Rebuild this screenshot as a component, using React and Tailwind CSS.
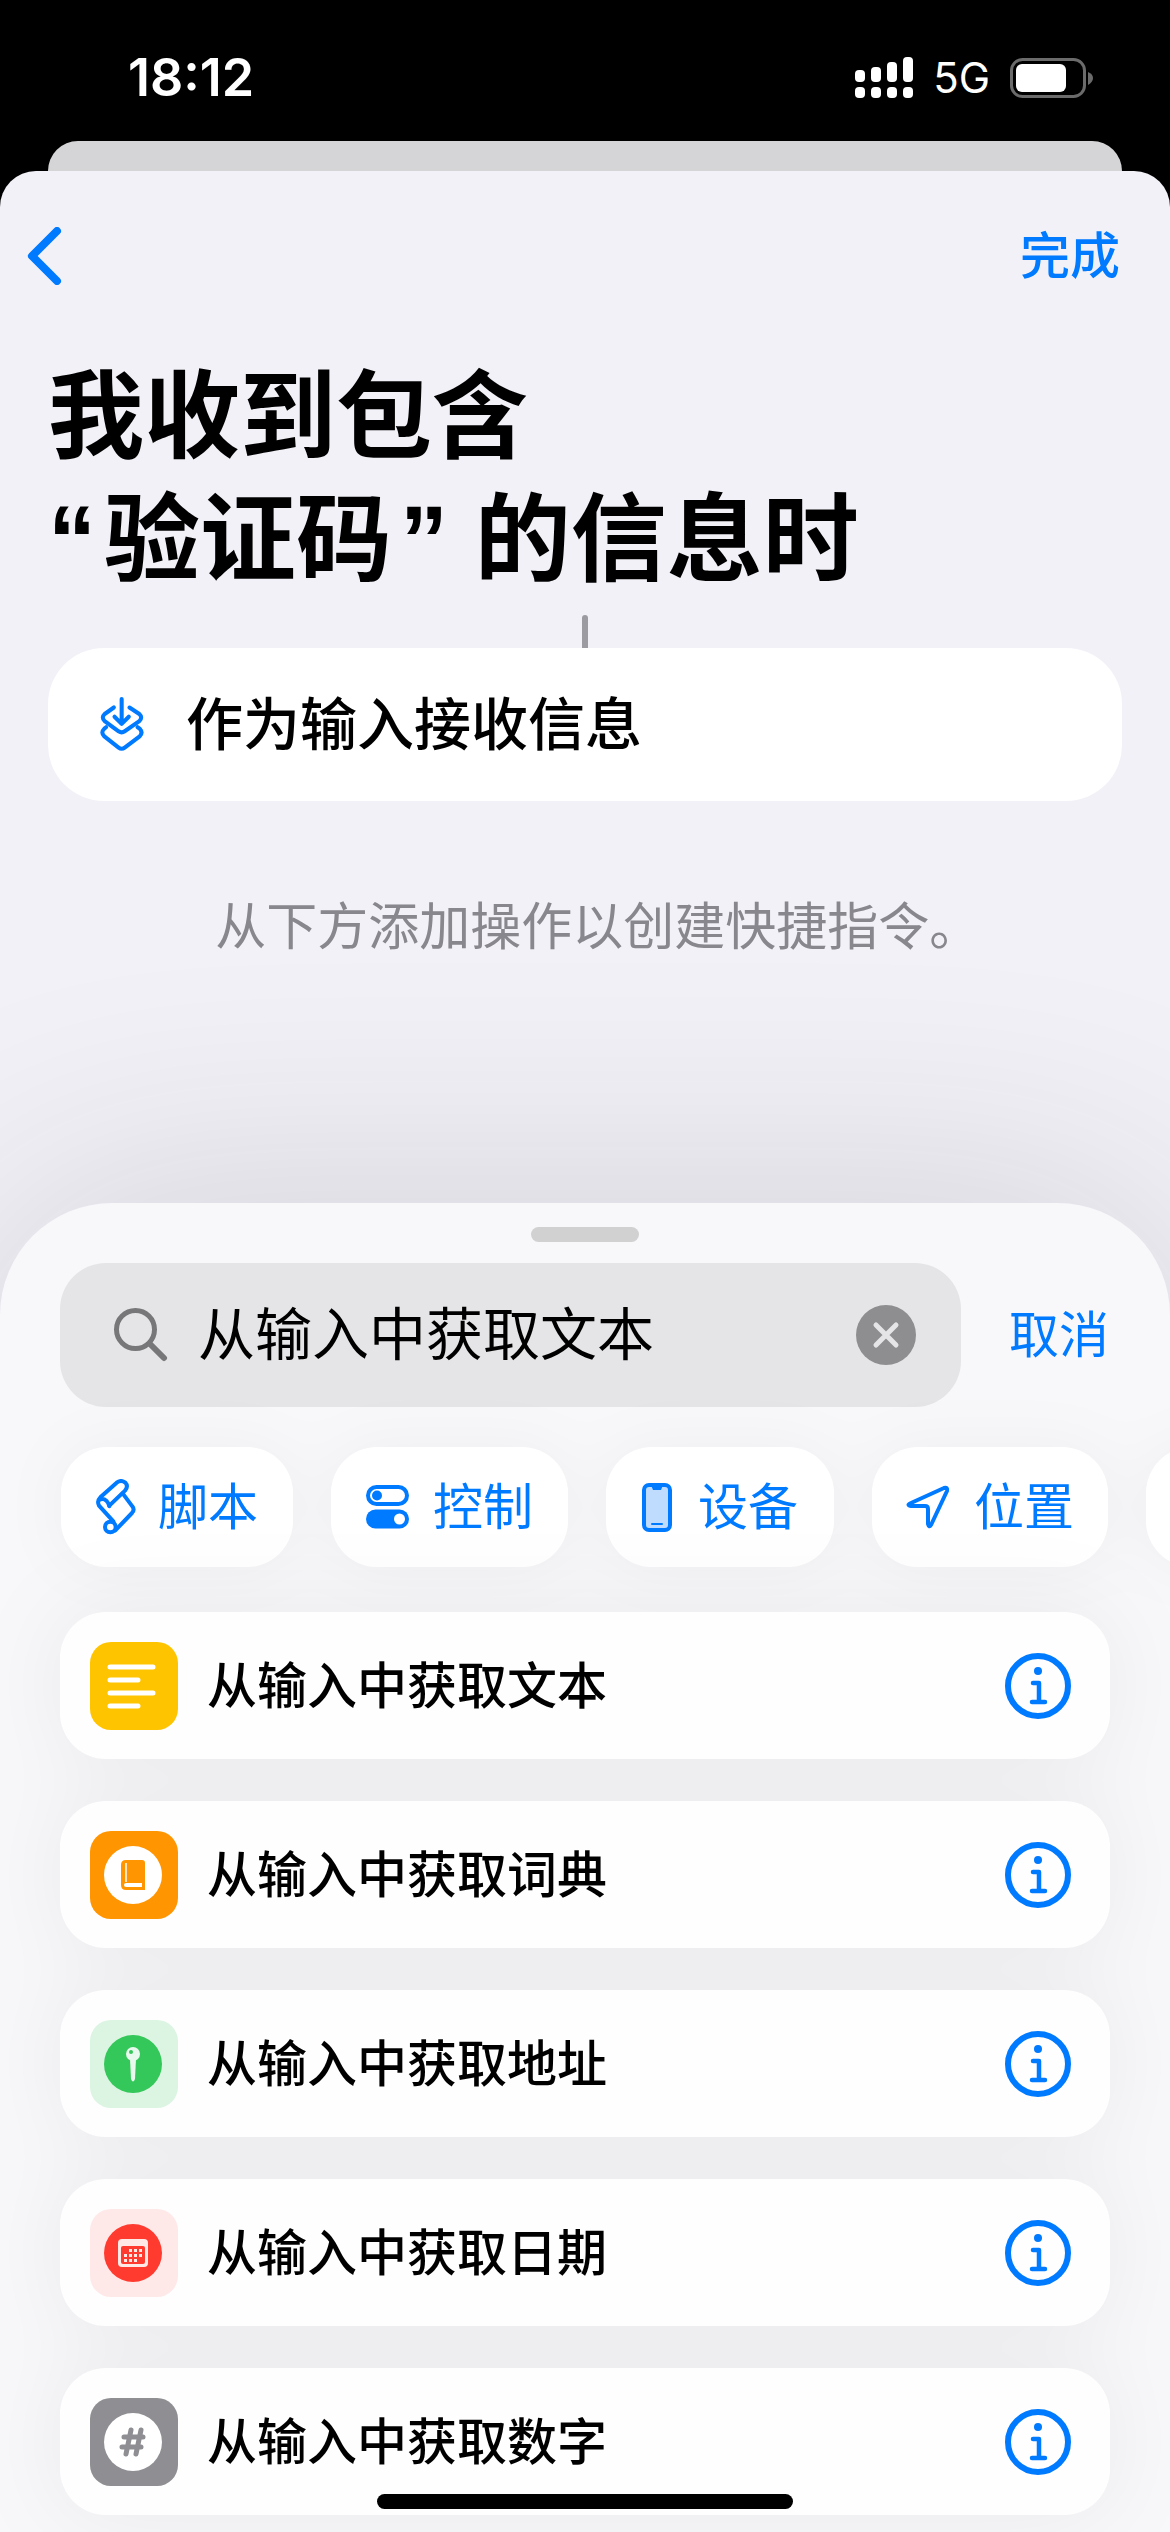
import { useState } from 'react';

const FONT = "font-['Inter','Noto_Sans_CJK_SC',sans-serif]";

function StatusBar() {
    return (
        <div className="flex h-[141px] items-start justify-between pt-[48px] pr-[76px] pl-[128px] text-white">
            <span className="text-[52px] leading-[60px] font-semibold">18:12</span>
            <div className="flex h-[60px] items-center gap-[20px]">
                <svg className="h-[42px] w-[58px]" viewBox="0 0 58 42" fill="currentColor">
                    <rect x="0" y="13" width="10" height="12" rx="4" />
                    <rect x="16" y="10" width="10" height="15" rx="4" />
                    <rect x="32" y="5" width="10" height="20" rx="4" />
                    <rect x="48" y="0" width="10" height="25" rx="4" />
                    <rect x="0" y="30" width="10" height="11" rx="4" />
                    <rect x="16" y="30" width="10" height="11" rx="4" />
                    <rect x="32" y="30" width="10" height="11" rx="4" />
                    <rect x="48" y="30" width="10" height="11" rx="4" />
                </svg>
                <span className="text-[42px] leading-[60px]">5G</span>
                <svg className="h-[40px] w-[84px]" viewBox="0 0 84 40" fill="none">
                    <rect x="1.5" y="1.5" width="73" height="37" rx="11" stroke="#6b6b6b" strokeWidth="3" />
                    <rect x="6" y="6" width="50" height="28" rx="6" fill="#fff" />
                    <path d="M78 14 Q83 16 83 20 Q83 24 78 27 Z" fill="#6b6b6b" />
                </svg>
            </div>
        </div>
    );
}

function ReceiveIcon() {
    return (
        <svg className="h-[55px] w-[44px] shrink-0" viewBox="0 0 128 162" fill="none" stroke="#007aff" strokeWidth="12" strokeLinecap="round" strokeLinejoin="round">
            <path d="M63 6V78M42 58L63 79L84 58" />
            <path d="M40 31L13 50Q2 60 13 71L54 101Q63 107 72 101L115 71Q126 60 115 50L86 31" />
            <path d="M17 89L12 93Q0 105 12 116L54 149Q63 156 72 149L116 116Q127 105 116 93L110 89" />
        </svg>
    );
}

function ScriptIcon() {
    return (
        <svg className="h-[56px] w-[40px]" viewBox="0 0 120 168" fill="none" stroke="currentColor" strokeWidth="12" strokeLinecap="round" strokeLinejoin="round">
            <path d="M40 80L87 35Q98 22 88 11Q75 1 62 11L13 55Q2 66 9 80L52 127" />
            <path d="M11 62Q22 57 32 66Q39 74 40 82" />
            <path d="M80 43L109 82Q117 92 108 102L58 154" />
            <circle cx="43" cy="144" r="16" />
        </svg>
    );
}

function ControlIcon() {
    return (
        <svg className="h-[44px] w-[43px]" viewBox="0 0 43 44">
            <rect x="2" y="2" width="39" height="17" rx="8.5" fill="none" stroke="currentColor" strokeWidth="4" />
            <circle cx="11" cy="10.5" r="5" fill="currentColor" />
            <rect x="0" y="24.5" width="43" height="19" rx="9.5" fill="currentColor" />
            <circle cx="33.5" cy="34" r="5.5" fill="#fff" />
        </svg>
    );
}

function DeviceIcon() {
    return (
        <svg className="h-[49px] w-[30px]" viewBox="0 0 30 49">
            <rect x="2" y="2" width="26" height="45" rx="5" fill="#bfdcff" stroke="currentColor" strokeWidth="4" />
            <path d="M9 2H21L19 7H11Z" fill="currentColor" />
            <path d="M10 41H20" stroke="currentColor" strokeWidth="2" strokeLinecap="round" />
        </svg>
    );
}

function LocationIcon() {
    return (
        <svg className="h-[44px] w-[44px]" viewBox="0 0 44 44" fill="none" stroke="currentColor" strokeWidth="4" strokeLinejoin="round">
            <path d="M38 3Q42 2 41 6L25 40Q23 43 22 39V24Q22 21 19 21H5Q0 20 5 18Z" />
        </svg>
    );
}

function InfoIcon() {
    return (
        <svg className="h-[66px] w-[66px]" viewBox="0 0 66 66" fill="none" stroke="#007aff" strokeLinecap="round" strokeLinejoin="round">
            <circle cx="33" cy="33" r="30" strokeWidth="6" />
            <circle cx="33" cy="18" r="4" fill="#007aff" stroke="none" />
            <path d="M28 30H34V49M27 49H40" strokeWidth="4.5" />
        </svg>
    );
}

function TextGlyph() {
    return (
        <svg className="h-[88px] w-[88px]" viewBox="0 0 88 88" stroke="#fff" strokeWidth="5" strokeLinecap="round">
            <path d="M20 25H63M20 38H48M20 51H63M20 64H48" />
        </svg>
    );
}

function BookGlyph() {
    return (
        <svg className="h-[88px] w-[88px]" viewBox="0 0 88 88">
            <circle cx="43" cy="44" r="29" fill="#fff" />
            <path d="M36 29H52Q55 29 55 32V56H55V59H36Q31 59 31 54V34Q31 29 36 29Z" fill="#ff9500" />
            <path d="M36 32V51" stroke="#fff" strokeWidth="1.5" />
            <path d="M36 52H52V56H36Q34 56 34 54Q34 52 36 52Z" fill="#fff" />
        </svg>
    );
}

function PinGlyph() {
    return (
        <svg className="h-[88px] w-[88px]" viewBox="0 0 88 88">
            <circle cx="43" cy="44" r="29" fill="#34c759" />
            <circle cx="43" cy="34" r="7" fill="#e9f9ed" />
            <path d="M40 39H46L45 59Q43 64 41 59Z" fill="#e9f9ed" />
            <circle cx="41" cy="32" r="2" fill="#34c759" />
        </svg>
    );
}

function CalendarGlyph() {
    return (
        <svg className="h-[88px] w-[88px]" viewBox="0 0 88 88">
            <circle cx="43" cy="44" r="29" fill="#ff3b30" />
            <rect x="28" y="30" width="30" height="28" rx="4" fill="#ffe9e7" />
            <rect x="31" y="37" width="24" height="18" rx="2" fill="#ff3b30" />
            <path d="M39 41.500H54M34 46.500H54M34 51.500H49" stroke="#ffe9e7" strokeWidth="3" strokeDasharray="3 2" />
        </svg>
    );
}

function HashGlyph() {
    return (
        <svg className="h-[88px] w-[88px]" viewBox="0 0 88 88" strokeLinecap="round">
            <circle cx="43" cy="44" r="29" fill="#fff" />
            <path d="M41 32L36 56M51 32L46 56M34 39H53M32 49H51" stroke="#8e8e93" strokeWidth="5" />
        </svg>
    );
}

const categories = [
    { label: '脚本', icon: ScriptIcon, style: 'gap-[22px] px-[35px]' },
    { label: '控制', icon: ControlIcon, style: 'gap-[24px] px-[35px]' },
    { label: '设备', icon: DeviceIcon, style: 'gap-[26px] px-[36px]' },
    { label: '位置', icon: LocationIcon, style: 'gap-[24px] px-[34px]' },
];

const actions = [
    { label: '从输入中获取文本', glyph: TextGlyph, tile: 'bg-[#ffc400]' },
    { label: '从输入中获取词典', glyph: BookGlyph, tile: 'bg-[#ff9500]' },
    { label: '从输入中获取地址', glyph: PinGlyph, tile: 'bg-[#dcf5e2]' },
    { label: '从输入中获取日期', glyph: CalendarGlyph, tile: 'bg-[#ffe9e8]' },
    { label: '从输入中获取数字', glyph: HashGlyph, tile: 'bg-[#8e8e93]' },
];

function ActionSheet() {
    const [query, setQuery] = useState('从输入中获取文本');

    return (
        <section className="overflow-hidden rounded-t-[112px] bg-[#f8f8fa] pb-[17px] shadow-[0_0_260px_rgba(40,40,50,0.16)]">
            <div className="mx-auto mt-[24px] h-[15px] w-[108px] rounded-full bg-[#d1d1d2]" />

            <div className="mt-[21px] flex items-center pr-[61px] pl-[60px]">
                <label className="flex h-[144px] min-w-0 flex-1 items-center rounded-[46px] bg-[#e5e5e7] pr-[45px] pl-[54px]">
                    <svg className="h-[54px] w-[54px] shrink-0" viewBox="0 0 54 54" fill="none" stroke="#77777a" strokeLinecap="round">
                        <circle cx="21.500" cy="21.500" r="19" strokeWidth="5" />
                        <path d="M36 36L50 50" strokeWidth="6" />
                    </svg>
                    <input
                        type="text"
                        aria-label="搜索"
                        value={query}
                        onChange={(e) => setQuery(e.target.value)}
                        className="ml-[30px] min-w-0 flex-1 bg-transparent text-[57px] leading-[80px] text-black outline-none"
                    />
                    <button type="button" aria-label="清除" onClick={() => setQuery('')} className="shrink-0">
                        <svg className="h-[60px] w-[60px]" viewBox="0 0 60 60">
                            <circle cx="30" cy="30" r="30" fill="#8e8e91" />
                            <path d="M20 20L40 40M40 20L20 40" stroke="#e5e5e7" strokeWidth="5" strokeLinecap="round" />
                        </svg>
                    </button>
                </label>
                <button type="button" className="ml-[48px] shrink-0 text-[50px] leading-[72px] text-[#007aff]">
                    取消
                </button>
            </div>

            <div className="mt-[40px] flex gap-[38px] pl-[61px] drop-shadow-[0_0_30px_rgba(0,0,0,0.04)]">
                {categories.map(({ label, icon: Icon, style }) => (
                    <button
                        key={label}
                        type="button"
                        className={`flex h-[120px] shrink-0 items-center rounded-[46px] bg-white text-[50px] leading-[72px] text-[#007aff] ${style}`}
                    >
                        <Icon />
                        {label}
                    </button>
                ))}
                <div className="h-[120px] w-[232px] shrink-0 rounded-[46px] bg-white" />
            </div>

            <ul className="mt-[45px] flex flex-col gap-[42px] px-[60px] drop-shadow-[0_0_45px_rgba(0,0,0,0.06)]">
                {actions.map(({ label, glyph: Glyph, tile }) => (
                    <li key={label} className="flex h-[147px] items-center rounded-[46px] bg-[#fefeff] pr-[39px] pl-[30px]">
                        <span className={`h-[88px] w-[88px] shrink-0 rounded-[21px] ${tile}`}>
                            <Glyph />
                        </span>
                        <span className="ml-[29px] flex-1 text-[50px] leading-[72px] font-medium text-black">{label}</span>
                        <button type="button" aria-label={`${label} 信息`} className="shrink-0">
                            <InfoIcon />
                        </button>
                    </li>
                ))}
            </ul>
        </section>
    );
}

export default function App() {
    return (
        <div lang="zh-CN" className={`relative overflow-hidden bg-black ${FONT}`}>
            <StatusBar />

            {/* edge of the card behind */}
            <div className="mx-[48px] h-[30px] rounded-t-[30px] bg-[#d5d5d7]" />

            <main className="overflow-hidden rounded-t-[36px] bg-[#f2f1f7]">
                <header className="flex h-[170px] items-center justify-between pr-[50px] pl-[26px]">
                    <button type="button" aria-label="返回">
                        <svg className="h-[58px] w-[36px]" viewBox="0 0 36 58" fill="none" stroke="#007aff" strokeWidth="8" strokeLinecap="round" strokeLinejoin="round">
                            <path d="M31 4L6 29L31 54" />
                        </svg>
                    </button>
                    <button type="button" className="text-[50px] leading-[72px] font-medium text-[#007aff]">
                        完成
                    </button>
                </header>

                <h1 className="mt-[14px] px-[48px] font-['Liberation_Sans','Noto_Sans_CJK_SC',sans-serif] text-[96px] leading-[123px] font-bold text-black">
                    我收到包含
                    <br />
                    <span className="mr-[8px]">“</span>验证码<span className="ml-[8px]">”</span> 的信息时
                </h1>

                <div className="mx-auto mt-[14px] h-[33px] w-[6px] rounded-t-full bg-[#9c9ba1]" />

                <button type="button" className="mx-[48px] flex h-[153px] w-[calc(100%-96px)] items-center gap-[42px] rounded-[56px] bg-white px-[52px] text-[57px] leading-[80px] font-medium text-black">
                    <ReceiveIcon />
                    作为输入接收信息
                </button>

                {/* halt sets the closing full stop in a half-width cell */}
                <p className="mt-[90px] mb-[240px] text-center text-[51px] leading-[72px] text-[#88878d] [font-feature-settings:'halt']">
                    从下方添加操作以创建快捷指令。
                </p>

                <ActionSheet />
            </main>

            <div className="absolute bottom-[23px] left-1/2 h-[15px] w-[416px] -translate-x-1/2 rounded-full bg-black" />
        </div>
    );
}
